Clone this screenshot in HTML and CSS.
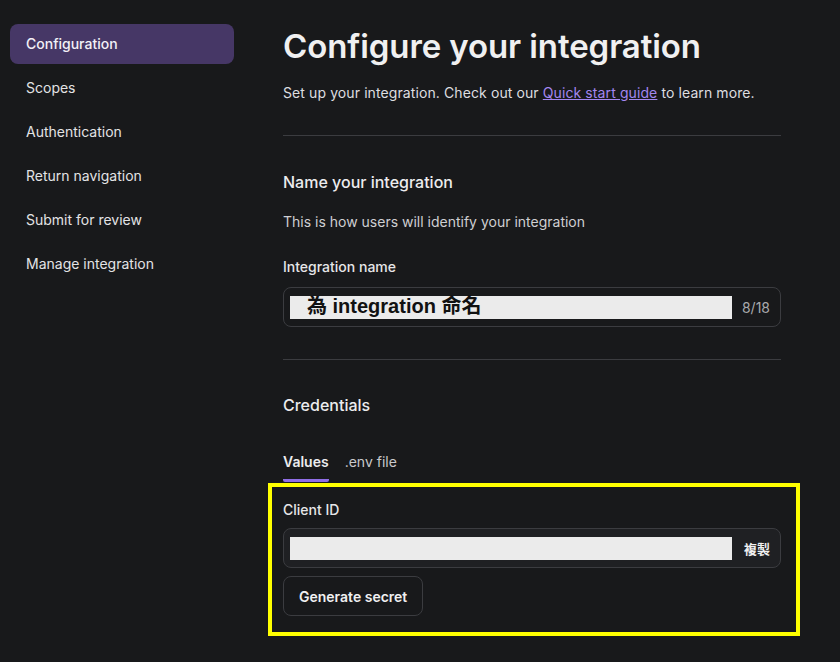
FILE: index.html
```html
<!DOCTYPE html>
<html lang="en">
<head>
    <meta charset="UTF-8">
    <meta name="viewport" content="width=device-width, initial-scale=1.0">
    <title>Configure your integration</title>
    <link rel="stylesheet" href="styles.css">
</head>
<body>

    <div class="page">
        <nav class="sidebar">
            <a class="nav-item active" href="#">Configuration</a>
            <a class="nav-item" href="#">Scopes</a>
            <a class="nav-item" href="#">Authentication</a>
            <a class="nav-item" href="#">Return navigation</a>
            <a class="nav-item" href="#">Submit for review</a>
            <a class="nav-item" href="#">Manage integration</a>
        </nav>

        <main class="content">
            <h1 class="title">Configure your integration</h1>
            <p class="intro">Set up your integration. Check out our <a href="#">Quick start guide</a> to learn more.</p>

            <hr class="divider">

            <section class="section">
                <h2 class="section-title">Name your integration</h2>
                <p class="section-desc">This is how users will identify your integration</p>
                <label class="field-label">Integration name</label>
                <div class="field">
                    <div class="redacted"><span class="typed">為 integration 命名</span></div>
                    <span class="counter">8/18</span>
                </div>
            </section>

            <hr class="divider">

            <section class="section credentials">
                <h2 class="section-title">Credentials</h2>
                <div class="tabs">
                    <span class="tab selected">Values</span>
                    <span class="tab">.env file</span>
                </div>

                <div class="highlight">
                    <label class="field-label">Client ID</label>
                    <div class="field filled">
                        <div class="redacted"></div>
                        <button class="copy">複製</button>
                    </div>
                    <button class="btn-secret">Generate secret</button>
                </div>
            </section>
        </main>
    </div>

</body>
</html>
```

FILE: styles.css
```css
/* Basic Styling */
body {
    font-family: Inter, "Noto Sans CJK TC", sans-serif;
    margin: 0;
    padding: 0;
    background-color: #18191b;
    color: #e9e9ea;
}

.page {
    display: flex;
    align-items: flex-start;
}

/* Sidebar */
.sidebar {
    width: 224px;
    margin: 24px 0 0 10px;
    display: flex;
    flex-direction: column;
    gap: 4px;
}

.nav-item {
    height: 40px;
    line-height: 40px;
    padding-left: 16px;
    font-size: 14px;
    color: #e3e3e5;
    text-decoration: none;
    border-radius: 8px;
}

.nav-item.active {
    background-color: #463766;
    font-weight: 500;
    color: #f2f0f7;
}

/* Main column */
.content {
    width: 498px;
    margin-left: 49px;
    padding-top: 24px;
}

.title {
    margin: 0;
    font-size: 33px;
    line-height: 44px;
    font-weight: 600;
    letter-spacing: -0.1px;
    color: #f0f0f1;
}

.intro {
    margin: 14px 0 0;
    font-size: 14px;
    line-height: 22px;
    letter-spacing: 0.1px;
    color: #dedee0;
}

.intro a {
    color: #a387f0;
}

.divider {
    border: none;
    border-top: 1px solid #3b3c40;
    margin: 31px 0 0;
}

.section {
    padding-top: 34px;
}

.section.credentials {
    padding-top: 33px;
}

.section-title {
    margin: 0;
    font-size: 16px;
    line-height: 24px;
    font-weight: 500;
    color: #ececee;
}

.section-desc {
    margin: 17px 0 0;
    font-size: 14px;
    line-height: 22px;
    color: #cfcfd2;
}

.field-label {
    display: block;
    margin-top: 23px;
    font-size: 14px;
    line-height: 22px;
    font-weight: 500;
    color: #e6e6e8;
}

.field {
    margin-top: 9px;
    height: 38px;
    border: 1px solid #3b3c40;
    border-radius: 8px;
    display: flex;
    align-items: center;
    padding: 0 10px 0 6px;
    margin-bottom: 32px;
}

.redacted {
    width: 442px;
    height: 23px;
    background-color: #ebebeb;
    display: flex;
    align-items: center;
}

.typed {
    padding-left: 17px;
    font-family: "Liberation Sans", "Noto Sans CJK TC", sans-serif;
    font-size: 20px;
    line-height: 20px;
    font-weight: bold;
    color: #111;
    margin-top: -2px;
}

.counter {
    margin-left: auto;
    font-size: 14px;
    color: #a9a9ad;
}

.tabs {
    display: flex;
    gap: 16px;
    margin-top: 34px;
}

.tab {
    font-size: 14px;
    line-height: 22px;
    padding-bottom: 6px;
    color: #c9c9cc;
}

.tab.selected {
    font-weight: 600;
    color: #ececee;
    border-bottom: 3px solid #8f6ee6;
    border-radius: 0 0 2px 2px;
}

/* Yellow highlight box */
.highlight {
    margin: 1px -19px 0 -15px;
    padding: 0 15px 16px 11px;
    border: 4px solid #ffff00;
}

.highlight .field-label {
    margin-top: 12px;
}

.field.filled {
    background-color: #1f2023;
    margin-top: 7px;
    margin-bottom: 0;
    height: 38px;
}

.copy {
    margin-left: auto;
    background: none;
    border: none;
    padding: 0;
    font-family: "Noto Sans CJK TC", sans-serif;
    font-size: 13px;
    font-weight: bold;
    color: #f0f0f0;
}

.btn-secret {
    margin-top: 8px;
    height: 40px;
    padding: 0 15px;
    background: #18191b;
    border: 1px solid #3b3c40;
    border-radius: 8px;
    font-family: Inter, sans-serif;
    font-size: 14px;
    font-weight: 600;
    color: #f0f0f1;
    cursor: pointer;
}
```
